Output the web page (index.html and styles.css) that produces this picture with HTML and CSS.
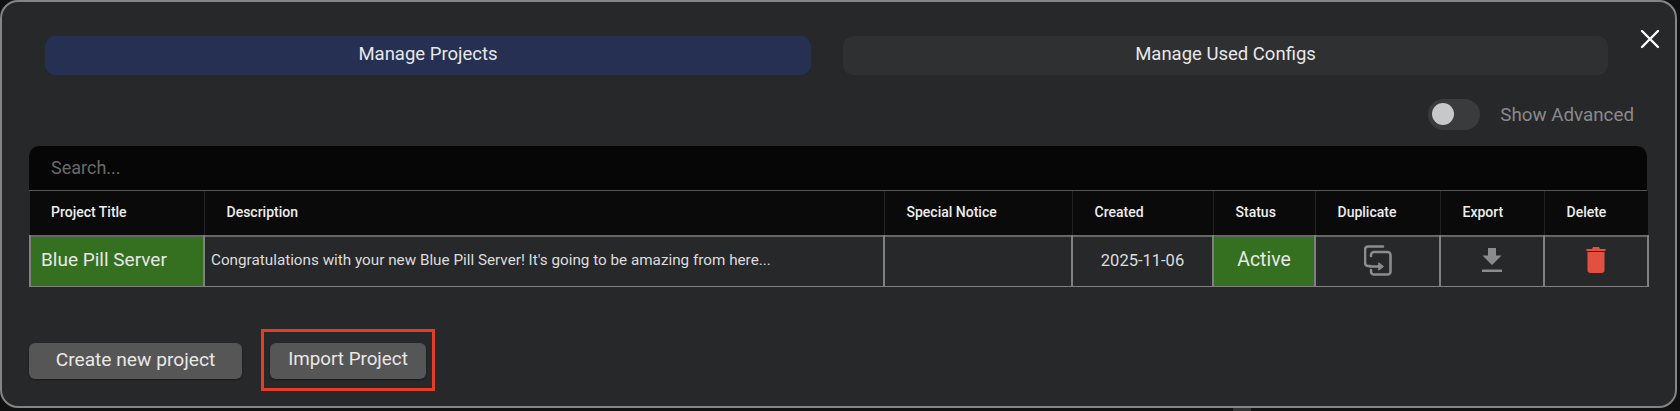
FILE: index.html
```html
<!DOCTYPE html>
<html lang="en">
<head>
    <meta charset="UTF-8">
    <meta name="viewport" content="width=device-width, initial-scale=1.0">
    <title>Manage Projects</title>
    <link rel="stylesheet" href="styles.css">
</head>
<body>

    <div class="modal">
        <button class="close-button" aria-label="Close">
            <svg width="20" height="20" viewBox="0 0 20 20"><path d="M2 2L18 18M18 2L2 18" stroke="#fff" stroke-width="2.4" stroke-linecap="round"/></svg>
        </button>

        <div class="tabs">
            <div class="tab tab-active">Manage Projects</div>
            <div class="tab">Manage Used Configs</div>
        </div>

        <div class="advanced-row">
            <div class="toggle"><div class="toggle-knob"></div></div>
            <span class="advanced-label">Show Advanced</span>
        </div>

        <div class="table-box">
            <input class="search" type="text" placeholder="Search...">
            <table class="project-table">
                <colgroup>
                    <col class="col-title">
                    <col class="col-desc">
                    <col class="col-notice">
                    <col class="col-created">
                    <col class="col-status">
                    <col class="col-duplicate">
                    <col class="col-export">
                    <col class="col-delete">
                </colgroup>
                <thead>
                    <tr>
                        <th>Project Title</th>
                        <th>Description</th>
                        <th>Special Notice</th>
                        <th>Created</th>
                        <th>Status</th>
                        <th>Duplicate</th>
                        <th>Export</th>
                        <th>Delete</th>
                    </tr>
                </thead>
                <tbody>
                    <tr>
                        <td class="cell-green cell-name">Blue Pill Server</td>
                        <td class="cell-desc">Congratulations with your new Blue Pill Server! It's going to be amazing from here...</td>
                        <td></td>
                        <td class="cell-date">2025-11-06</td>
                        <td class="cell-green cell-status">Active</td>
                        <td class="cell-icon">
                            <svg width="28" height="31" viewBox="0 0 28 31" fill="none" stroke="#8c8c8c" stroke-width="2.6" stroke-linecap="round" stroke-linejoin="round">
                                <path d="M19 1.5H4a3 3 0 0 0-3 3V18a3 3 0 0 0 3 3h2"/>
                                <path d="M7 11V10a3 3 0 0 1 3-3H23.5a3 3 0 0 1 3 3V26.5a3 3 0 0 1-3 3H10a3 3 0 0 1-3-3V25"/>
                                <path d="M6 21.5H15"/>
                                <path d="M15 18L19.5 21.5L15 25Z" fill="#8c8c8c" stroke-width="1"/>
                            </svg>
                        </td>
                        <td class="cell-icon">
                            <svg width="20" height="24" viewBox="0 0 20 24"><path d="M6 0H14V7.5H19.5L10 17L0.5 7.5H6Z" fill="#8c8c8c"/><rect y="21.5" width="20" height="2.5" fill="#8c8c8c"/></svg>
                        </td>
                        <td class="cell-icon">
                            <svg width="20" height="26" viewBox="0 0 20 26"><path d="M7 0H13L14 2H19.5V4H0.5V2H6Z" fill="#e2513f"/><path d="M1.5 5H18.5V23a3 3 0 0 1-3 3H4.5a3 3 0 0 1-3-3Z" fill="#e2513f"/></svg>
                        </td>
                    </tr>
                </tbody>
            </table>
        </div>

        <div class="actions">
            <button class="action-button button-create">Create new project</button>
            <div class="highlight">
                <button class="action-button button-import">Import Project</button>
                <div class="highlight-box"></div>
            </div>
        </div>
    </div>
    <div class="bottom-tab"></div>

</body>
</html>
```

FILE: styles.css
```css
* { box-sizing: border-box; }
body { margin: 0; width: 1680px; height: 411px; overflow: hidden; background-color: #111; font-family: Roboto, Arial, sans-serif; }
button { font-family: inherit; }

.modal { position: relative; width: 1677px; height: 408px; padding: 34px 28px 0 27px; background-color: #27282a; border: 2px solid #858585; border-radius: 18px; }
.close-button { position: absolute; top: 27px; left: 1638px; width: 20px; height: 20px; padding: 0; background: none; border: none; }

.tabs { display: grid; grid-template-columns: 766px 765px; column-gap: 32px; margin-left: 16px; }
.tab { height: 39px; padding-bottom: 3px; line-height: 36px; text-align: center; font-size: 18.5px; color: #e8e8e8; background-color: #2f3032; border-radius: 10px; }
.tab-active { background-color: #253053; }

.advanced-row { display: flex; align-items: center; justify-content: flex-end; height: 31px; margin-top: 24px; padding-right: 13px; }
.toggle { width: 52px; height: 31px; padding: 4px; background-color: #3a3b3d; border-radius: 16px; }
.toggle-knob { width: 22px; height: 22px; background-color: #c8c8c8; border-radius: 50%; }
.advanced-label { margin-left: 20px; font-size: 18.8px; color: #8a8a8a; }

.table-box { width: 1618px; margin-top: 16px; }
.search { display: block; width: 100%; height: 45px; padding: 0 22px 2px; font-family: inherit; font-size: 18px; color: #ddd; background-color: #060606; border: none; border-bottom: 1px solid #555; border-radius: 10px 10px 0 0; }
.search::placeholder { color: #6a6a6a; }

.project-table { width: 100%; table-layout: fixed; border-collapse: collapse; }
.col-title { width: 174px; }
.col-desc { width: 680px; }
.col-notice { width: 188px; }
.col-created { width: 141px; }
.col-status { width: 102px; }
.col-duplicate { width: 125px; }
.col-export { width: 104px; }
.col-delete { width: 104px; }

.project-table th { height: 45px; padding: 0 0 2px 22px; text-align: left; font-size: 14px; font-weight: 500; color: #eee; background-color: #0a0a0a; border-left: 1px solid #222; }
.project-table th:first-child { padding-left: 21px; border-left: none; }
.project-table td { height: 50px; padding: 0 0 2px; color: #ddd; border: 2px solid #808080; border-bottom-width: 1px; border-top-color: #666; }
.project-table .cell-green { padding-bottom: 4px; color: #e8e8e8; background-color: #34701f; }
.project-table .cell-name { padding-left: 10px; font-size: 19px; }
.project-table .cell-desc { padding-left: 6px; font-size: 15.25px; }
.cell-date { text-align: center; font-size: 16.5px; }
.cell-status { text-align: center; font-size: 19.4px; }
.cell-icon { text-align: center; }
.cell-icon svg { display: inline-block; vertical-align: middle; }

.actions { display: flex; gap: 28px; margin-top: 56px; }
.action-button { height: 36px; padding: 0 0 3px; font-size: 18.8px; color: #e8e8e8; background-color: #565656; border: none; border-radius: 6px; box-shadow: 0 1px 2px rgba(0, 0, 0, 0.4); }
.button-create { width: 213px; font-size: 19.2px; }
.button-import { width: 156px; }
.highlight { position: relative; }
.highlight-box { position: absolute; top: -14px; right: -9px; bottom: -12px; left: -9px; border: 3px solid #e43d25; }

.bottom-tab { width: 18px; height: 3px; margin-left: 1233px; background-color: #333; }
```
